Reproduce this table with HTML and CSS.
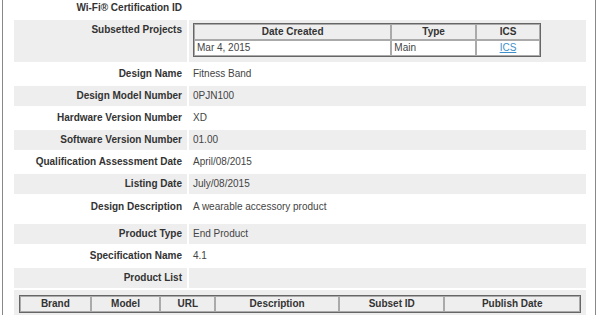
FILE: index.html
```html
<!DOCTYPE html>
<html>
<head>
<meta charset="utf-8">
<link rel="stylesheet" href="styles.css">
</head>
<body>
<div class="frame">
  <table class="detail">
    <tr>
      <th class="label">Wi-Fi® Certification ID</th>
      <td class="value"></td>
    </tr>
    <tr class="alt">
      <th class="label">Subsetted Projects</th>
      <td class="value nest">
        <table class="grid projects">
          <tr>
            <th class="c-date">Date Created</th>
            <th class="c-type">Type</th>
            <th class="c-ics">ICS</th>
          </tr>
          <tr>
            <td>Mar 4, 2015</td>
            <td>Main</td>
            <td class="center"><a href="#">ICS</a></td>
          </tr>
        </table>
      </td>
    </tr>
    <tr>
      <th class="label">Design Name</th>
      <td class="value">Fitness Band</td>
    </tr>
    <tr class="alt">
      <th class="label">Design Model Number</th>
      <td class="value">0PJN100</td>
    </tr>
    <tr>
      <th class="label">Hardware Version Number</th>
      <td class="value">XD</td>
    </tr>
    <tr class="alt">
      <th class="label">Software Version Number</th>
      <td class="value">01.00</td>
    </tr>
    <tr>
      <th class="label">Qualification Assessment Date</th>
      <td class="value">April/08/2015</td>
    </tr>
    <tr class="alt">
      <th class="label">Listing Date</th>
      <td class="value">July/08/2015</td>
    </tr>
    <tr class="tall">
      <th class="label">Design Description</th>
      <td class="value">A wearable accessory product</td>
    </tr>
    <tr class="alt">
      <th class="label">Product Type</th>
      <td class="value">End Product</td>
    </tr>
    <tr>
      <th class="label">Specification Name</th>
      <td class="value">4.1</td>
    </tr>
    <tr class="alt">
      <th class="label">Product List</th>
      <td class="value"></td>
    </tr>
    <tr class="alt">
      <td class="full" colspan="2">
        <table class="grid products">
          <tr>
            <th class="p-brand">Brand</th>
            <th class="p-model">Model</th>
            <th class="p-url">URL</th>
            <th class="p-desc">Description</th>
            <th class="p-subset">Subset ID</th>
            <th class="p-date">Publish Date</th>
          </tr>
        </table>
      </td>
    </tr>
  </table>
</div>
</body>
</html>
```
FILE: styles.css
```css
html, body {
  margin: 0;
  padding: 0;
  background: #fff;
}
body {
  font-family: "Liberation Sans", Arial, Helvetica, sans-serif;
  font-size: 10px;
  line-height: 14px;
  color: #333;
  overflow: hidden;
  height: 315px;
}
.frame {
  margin: 0 4px 0 2px;
  border-left: 1px solid #888;
  border-right: 1px solid #888;
  height: 315px;
  overflow: hidden;
  padding-left: 9px;
}
.detail {
  width: 576px;
  border-spacing: 2px;
  margin-top: -4px;
}
.detail > tbody > tr > th,
.detail > tbody > tr > td {
  height: 14px;
  padding: 3px 5px 3px 4px;
  vertical-align: top;
}
.label {
  width: 164px;
  text-align: right;
  font-weight: bold;
  color: #333;
}
.value {
  text-align: left;
  color: #444;
}
.alt > th,
.alt > td {
  background: #eee;
}
.detail > tbody > tr.tall > th,
.detail > tbody > tr.tall > td {
  padding-top: 4px;
  padding-bottom: 8px;
}
.detail > tbody > tr > td.nest {
  padding: 3px 4px 5px 4px;
}
.detail > tbody > tr > td.full {
  padding: 5px 5px 5px 5px;
}
.grid {
  border: 1px solid #666;
  border-spacing: 0;
  background: #fff;
}
.grid th,
.grid td {
  border: 1px solid #aaa;
  padding: 0 2px;
  line-height: 14px;
  font-size: 10px;
}
.grid th {
  background: #eee;
  font-weight: bold;
  text-align: center;
  color: #333;
}
.grid td {
  text-align: left;
  color: #444;
}
.grid td.center {
  text-align: center;
}
.grid a {
  color: #3d8fc9;
  text-decoration: underline;
}
.projects {
  width: 348px;
}
.c-date { width: 195px; }
.c-type { width: 80px; }
.c-ics { width: 59px; }
.products {
  width: 562px;
}
.p-brand { width: 66px; }
.p-model { width: 65px; }
.p-url { width: 50px; }
.p-desc { width: 120px; }
.p-subset { width: 102px; }
.p-date { width: 133px; }
```
